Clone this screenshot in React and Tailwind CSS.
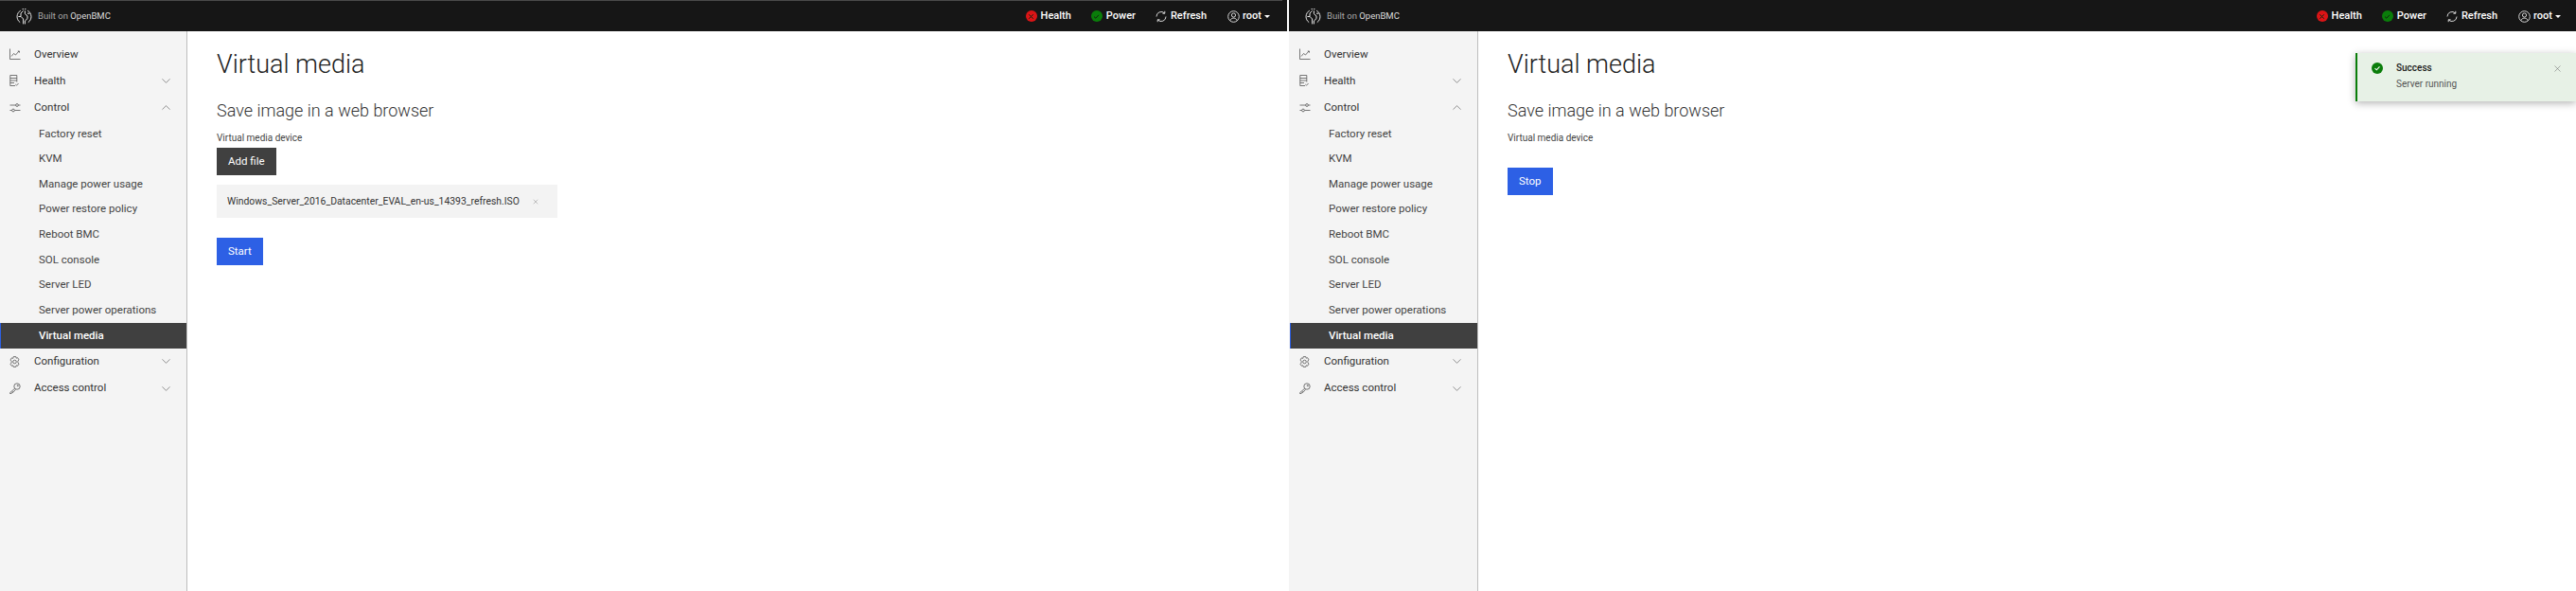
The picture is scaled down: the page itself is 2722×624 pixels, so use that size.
import { ChevronDown, ChevronUp, X } from "lucide-react";

const font = "font-['Roboto','Noto_Sans',sans-serif]";

function Logo() {
  return (
    <svg width="17" height="17" viewBox="0 0 17 17" fill="none" stroke="#e6e6e6" strokeWidth="1" className="shrink-0">
      <path d="M4.8 2.2A7.3 7.3 0 0 0 4.2 14.6" />
      <path d="M12.2 2.2A7.3 7.3 0 0 1 12.8 14.6" />
      <path d="M6.6 .6h1.4M9 .6h1.4" />
      <path d="M7.6 2.4 5 5v3.4L7.6 11v5.4" />
      <path d="M9.4 2.4v3.2l2.6 2.3v2.8L9.4 13v3.4" />
      <path d="M2.4 8.5h2.6M12 5.2h2.4" />
    </svg>
  );
}

function StatusDot({ ok }) {
  return (
    <span className={`flex h-[12px] w-[12px] items-center justify-center rounded-full ${ok ? "bg-[#0a7d0a]" : "bg-[#da1416]"}`}>
      <svg width="7" height="7" viewBox="0 0 7 7" fill="none" stroke="#10240f" strokeWidth="1">
        {ok ? <path d="M1 3.6 2.8 5.2 6 1.8" /> : <path d="M1.3 1.3l4.4 4.4M5.7 1.3 1.3 5.7" />}
      </svg>
    </span>
  );
}

function Header({ running }) {
  return (
    <header className="h-[33px] bg-[#161616]">
      <div className={`h-px w-[1355px] ${running ? "bg-[#161616]" : "bg-[#4a4a4a]"}`} />
      <div className={`flex h-[32px] items-center justify-between pl-[17px] ${running ? "pr-[16px]" : "pr-[18px]"}`}>
        <div className="flex items-center gap-[6px]">
          <Logo />
          <span className="text-[9.5px] text-[#a8a8a8]">
            Built on <span className="text-[#dcdcdc]">OpenBMC</span>
          </span>
        </div>
        <div className="flex items-center text-[11px] font-medium text-white">
          <span className="flex items-center gap-[4px]"><StatusDot />Health</span>
          <span className="ml-[21px] flex items-center gap-[4px]"><StatusDot ok />Power</span>
          <span className="ml-[21px] flex items-center gap-[4px]">
            <svg width="12" height="13" viewBox="0 0 12 13" fill="none" stroke="#e8e8e8" strokeWidth="0.9">
              <path d="M1 6.5A5 5 0 0 1 9.6 3M11 6.5A5 5 0 0 1 2.4 10" />
              <path d="M9.8 .8V3.2H7.4M2.2 12.2V9.8H4.6" />
            </svg>
            Refresh
          </span>
          <span className="ml-[22px] flex items-center gap-[3px]">
            <svg width="13" height="13" viewBox="0 0 13 13" fill="none" stroke="#e8e8e8" strokeWidth="0.9">
              <circle cx="6.5" cy="6.5" r="5.8" />
              <circle cx="6.5" cy="5" r="2.1" />
              <path d="M2.7 10.8c.7-1.8 2.1-2.6 3.8-2.6s3.1.8 3.8 2.6" />
            </svg>
            root
            <span className="h-0 w-0 border-x-[3px] border-t-[3px] border-x-transparent border-t-white" />
          </span>
        </div>
      </div>
    </header>
  );
}

function IconOverview() {
  return (
    <svg width="12" height="12" viewBox="0 0 12 12" fill="none" stroke="#565656" strokeWidth="0.8">
      <path d="M.5 .5v11h11" />
      <path d="M2 8.5 4.5 5.5l2 1.5L10 3" />
      <path d="M8.8 3H10.5V4.6" />
    </svg>
  );
}

function IconHealth() {
  return (
    <svg width="10" height="12" viewBox="0 0 10 12" fill="none" stroke="#565656" strokeWidth="0.8">
      <path d="M6 11.5H.8V.5h7v7" />
      <path d="M.8 3.5h7M.8 6h7M.8 8.5H5" />
      <path d="m6.3 10 1.2 1.2L9.6 9" />
    </svg>
  );
}

function IconControl() {
  return (
    <svg width="12" height="12" viewBox="0 0 12 12" fill="none" stroke="#565656" strokeWidth="0.8">
      <path d="M.5 3h6M9.5 3h2M.5 8.5h2M5.5 8.5h6" />
      <circle cx="8" cy="3" r="1.4" />
      <circle cx="4" cy="8.5" r="1.4" />
    </svg>
  );
}

function IconGear() {
  return (
    <svg width="11" height="12" viewBox="0 0 11 12" fill="none" stroke="#565656" strokeWidth="0.8">
      <path d="M4.2.6h2.6l.4 1.6 1.5-.5 1.3 2.2-1.1 1.2v1.8l1.1 1.2-1.3 2.2-1.5-.5-.4 1.6H4.2l-.4-1.6-1.5.5L1 8.3l1.1-1.2V5.3L1 4.1l1.3-2.2 1.5.5z" />
      <circle cx="5.5" cy="6" r="1.8" />
    </svg>
  );
}

function IconKey() {
  return (
    <svg width="12" height="12" viewBox="0 0 12 12" fill="none" stroke="#565656" strokeWidth="0.8">
      <circle cx="8" cy="4" r="3.2" />
      <circle cx="8.8" cy="3.2" r=".6" />
      <path d="M5.6 6.3.6 10.6v.9h1.5l.5-1h1v-1h1l1.9-2.2" />
    </svg>
  );
}

const controlItems = [
  "Factory reset",
  "KVM",
  "Manage power usage",
  "Power restore policy",
  "Reboot BMC",
  "SOL console",
  "Server LED",
  "Server power operations",
];

function NavRow({ icon, label, open, hasArrow = true }) {
  return (
    <div className="flex h-[28.3px] items-center pl-[10px] pr-[14px] text-[#333]">
      <span className="flex w-[26px] shrink-0 items-center justify-start">{icon}</span>
      <span className="flex-1">{label}</span>
      {hasArrow && (open
        ? <ChevronUp size={15} strokeWidth={0.9} className="text-[#444]" />
        : <ChevronDown size={15} strokeWidth={0.9} className="text-[#444]" />)}
    </div>
  );
}

function Sidebar({ running }) {
  return (
    <aside className={`flex shrink-0 flex-col border-r border-[#bdbdbd] bg-[#f4f4f4] pt-[10px] text-[11.5px] ${running ? "w-[200px] pl-px" : "w-[198px]"}`}>
      <NavRow icon={<IconOverview />} label="Overview" hasArrow={false} />
      <NavRow icon={<IconHealth />} label="Health" />
      <NavRow icon={<IconControl />} label="Control" open />
      {controlItems.map((item) => (
        <div key={item} className="flex h-[26.6px] items-center pl-[41px] text-[#444]">{item}</div>
      ))}
      <div className="flex h-[27px] items-center border-l border-[#2d60e5] bg-[#404040] pl-[40px] font-medium text-white">
        Virtual media
      </div>
      <NavRow icon={<IconGear />} label="Configuration" />
      <NavRow icon={<IconKey />} label="Access control" />
    </aside>
  );
}

function Btn({ children, dark }) {
  return (
    <button className={`flex h-[29px] items-center px-3 text-[11.5px] text-white ${dark ? "bg-[#404040]" : "bg-[#2d60e5]"}`}>
      {children}
    </button>
  );
}

function Pane({ running }) {
  return (
    <div className={`relative flex h-full flex-1 flex-col ${font}`}>
      <Header running={running} />
      <div className="flex flex-1">
        <Sidebar running={running} />
        <main className="flex-1 bg-white pl-[31px] pt-[18px]">
          <h1 className="text-[27px] font-light leading-[34px] text-[#222]">Virtual media</h1>
          <h2 className="mt-[20px] text-[18px] font-light leading-[24px] text-[#333]">Save image in a web browser</h2>
          <div className="mt-[10px] text-[10px] leading-[14px] text-[#444]">Virtual media device</div>
          {running ? (
            <div className="mt-[24px] flex"><Btn>Stop</Btn></div>
          ) : (
            <>
              <div className="mt-[3px] flex"><Btn dark>Add file</Btn></div>
              <div className="mt-[10px] flex h-[35px] w-[360px] items-center whitespace-nowrap bg-[#f3f3f3] pl-[11px] text-[10.4px] text-[#333]">
                Windows_Server_2016_Datacenter_EVAL_en-us_14393_refresh.ISO
                <X size={8} strokeWidth={1} className="ml-[13px] shrink-0 text-[#555]" />
              </div>
              <div className="mt-[21px] flex"><Btn>Start</Btn></div>
            </>
          )}
        </main>
      </div>
      {running && (
        <div className="absolute right-0 top-[56px] flex h-[51px] w-[233px] border-l-[2px] border-[#0a7d0a] bg-[#e7f1e6] pl-[15px] pr-[14px] pt-[9px] text-[10px] shadow-[0_2px_8px_rgba(0,0,0,0.3)]">
          <span className="mt-[1px] flex h-[12px] w-[12px] shrink-0 items-center justify-center rounded-full bg-[#0a7d0a]">
            <svg width="8" height="8" viewBox="0 0 8 8" fill="none" stroke="#fff" strokeWidth="1.1"><path d="M1.5 4.2 3.3 5.8 6.5 2.3" /></svg>
          </span>
          <div className="ml-[14px] flex-1">
            <div className="font-medium leading-[14px] text-[#222]">Success</div>
            <div className="mt-[3px] leading-[14px] text-[#555]">Server running</div>
          </div>
          <X size={11} strokeWidth={1} className="mt-[2px] text-[#555]" />
        </div>
      )}
    </div>
  );
}

export default function App() {
  return (
    <div className="flex h-[624px] w-[2722px] overflow-hidden bg-white">
      <Pane />
      <div className="w-[2px] shrink-0 bg-white" />
      <Pane running />
    </div>
  );
}
